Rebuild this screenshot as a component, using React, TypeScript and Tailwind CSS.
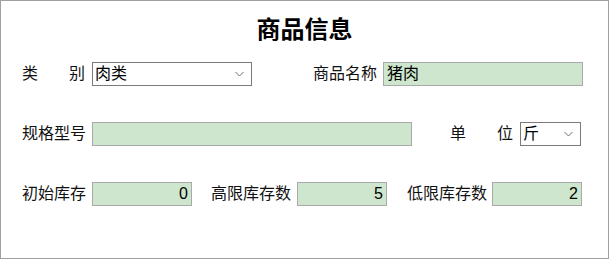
import React from "react";

const font = { fontFamily: '"Liberation Sans", "Noto Sans CJK SC", sans-serif' };

function Chevron() {
  return (
    <svg width="9" height="6" viewBox="0 0 9 6" className="shrink-0">
      <polyline points="0.5,1 4.5,5 8.5,1" fill="none" stroke="#6e6e6e" strokeWidth="1" />
    </svg>
  );
}

function Select({ value, width }: { value: string; width: string }) {
  return (
    <div
      className={`${width} h-[24px] border border-[#7a7a7a] bg-white flex items-center justify-between pl-[2px] pr-[7px] text-[16px] leading-none text-black`}
    >
      <span>{value}</span>
      <Chevron />
    </div>
  );
}

function Field({ value, width, right }: { value: string; width: string; right?: boolean }) {
  return (
    <div
      className={`${width} h-[24px] border border-[#a9a9a9] bg-[#cde6cd] flex items-center px-[3px] text-[16px] leading-none text-black ${
        right ? "justify-end" : "justify-start"
      }`}
    >
      {value}
    </div>
  );
}

export default function App() {
  return (
    <div style={font} className="w-[609px] h-[259px] border border-[#a0a0a0] bg-white text-[16px] text-[#111] whitespace-nowrap">
      {/* Title */}
      <div className="mt-[14px] h-[30px] leading-[30px] text-center text-[24px] font-bold text-black">
        商品信息
      </div>

      {/* Row 1 */}
      <div className="mt-[17px] flex items-center pl-[21px]">
        <div className="w-[63px] shrink-0 flex justify-between">
          <span>类</span>
          <span>别</span>
        </div>
        <div className="ml-[7px]">
          <Select value="肉类" width="w-[160px]" />
        </div>
        <div className="ml-[61px] w-[64px] shrink-0">商品名称</div>
        <div className="ml-[6px]">
          <Field value="猪肉" width="w-[200px]" />
        </div>
      </div>

      {/* Row 2 */}
      <div className="mt-[36px] flex items-center pl-[21px]">
        <div className="w-[63px] shrink-0">规格型号</div>
        <div className="ml-[7px]">
          <Field value="" width="w-[320px]" />
        </div>
        <div className="ml-[38px] w-[63px] shrink-0 flex justify-between">
          <span>单</span>
          <span>位</span>
        </div>
        <div className="ml-[7px]">
          <Select value="斤" width="w-[61px]" />
        </div>
      </div>

      {/* Row 3 */}
      <div className="mt-[36px] flex items-center pl-[21px]">
        <div className="w-[63px] shrink-0">初始库存</div>
        <div className="ml-[7px]">
          <Field value="0" width="w-[100px]" right />
        </div>
        <div className="ml-[19px] w-[80px] shrink-0">高限库存数</div>
        <div className="ml-[6px]">
          <Field value="5" width="w-[90px]" right />
        </div>
        <div className="ml-[20px] w-[80px] shrink-0">低限库存数</div>
        <div className="ml-[5px]">
          <Field value="2" width="w-[90px]" right />
        </div>
      </div>
    </div>
  );
}
